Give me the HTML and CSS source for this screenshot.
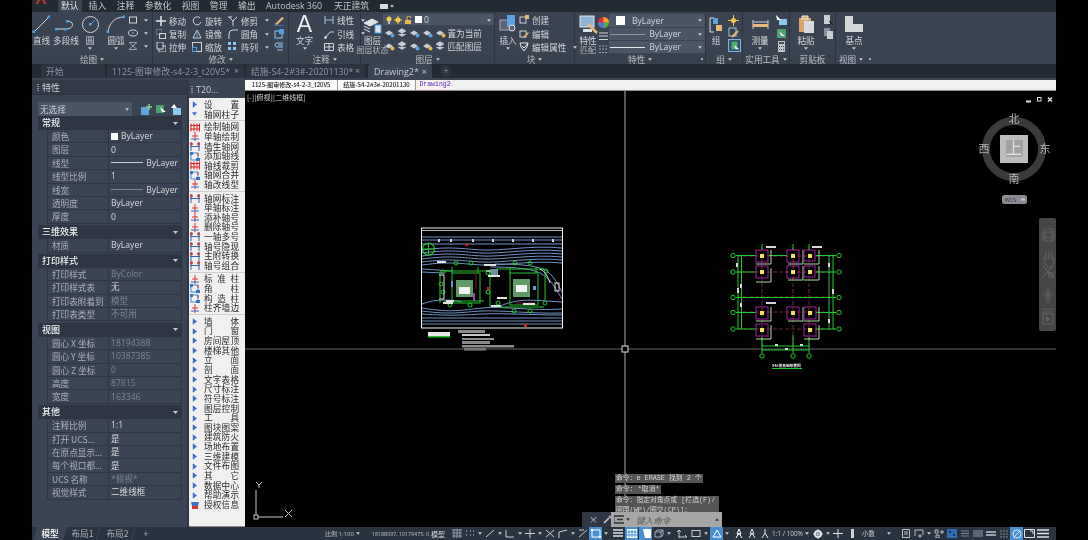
FILE: index.html
```html
<!DOCTYPE html>
<html lang="zh">
<head>
<meta charset="utf-8">
<title>AutoCAD</title>
<link rel="stylesheet" href="styles.css">
</head>
<body>
<svg class="defs" width="0" height="0">
  <symbol id="ar" viewBox="0 0 6 8"><path d="M1 0l5 4-5 4z" fill="#3f6fc0"/></symbol>
  <symbol id="gd" viewBox="0 0 10 9"><path d="M1 .5v8M4 .5v8M7 .5v8M9.5 .5v8M0 2.5h10M0 6h10" stroke="#d22" fill="none"/></symbol>
  <symbol id="ax" viewBox="0 0 10 9"><path d="M5 0v9M2 4h6" stroke="#d33" fill="none"/><path d="M1 7h8" stroke="#36c"/></symbol>
  <symbol id="dm" viewBox="0 0 10 9"><path d="M1 0v9M9 0v9M0 4.500h10" stroke="#36a" fill="none"/><circle cx="1.500" cy="2" r="1.400" fill="#c33"/><circle cx="8.500" cy="2" r="1.400" fill="#c33"/></symbol>
  <symbol id="cl" viewBox="0 0 10 9"><path d="M1 1h7v7H1z" stroke="#48c" fill="none"/><path d="M0 0h3v3H0zM6 6h4v3H6z" fill="#37b"/><path d="M8 1v3" stroke="#c33"/></symbol>
  <symbol id="dot" viewBox="0 0 5 3"><path d="M0 0h5L2.500 3z" fill="#c9ced6"/></symbol>
  <symbol id="lay" viewBox="0 0 12 10"><path d="M1 5l4-2.500L9 5 5 7.500z" fill="#c9ced6"/><circle cx="8.500" cy="7.500" r="2" fill="#5aa4e0"/></symbol>
  <symbol id="lay2" viewBox="0 0 12 10"><path d="M1 5l4-2.500L9 5 5 7.500z" fill="#c9ced6"/><circle cx="8.500" cy="7.500" r="2" fill="#e8b84a"/></symbol>
  <symbol id="lay3" viewBox="0 0 12 10"><path d="M1 3l4-2.500L9 3 5 5.500zM1 6l4 2.500L9 6" fill="#c9ced6" stroke="#c9ced6" stroke-width=".6"/></symbol>
</svg>

<div class="app">
  <header class="menubar">
    <svg class="logo" width="12" height="8" viewBox="0 0 12 8"><path d="M0 8L5 0h2l5 8H9L6 3 3 8z" fill="#a8322c"/></svg>
    <span class="m active">默认</span><span class="m">插入</span><span class="m">注释</span><span class="m">参数化</span><span class="m">视图</span><span class="m">管理</span><span class="m">输出</span><span class="m en">Autodesk 360</span><span class="m">天正建筑</span>
    <span class="mini"><i></i><svg width="4" height="3"><use href="#dot"/></svg></span>
  </header>

  <section class="ribbon">
    <div class="panel p1">
      <div class="pbody big-row">
        <div class="big w19 mr2"><svg width="19" height="19" viewBox="0 0 19 19"><path d="M2 17L17 2" stroke="#cfd4da"/><rect x="15.500" y="0.500" width="2.500" height="2.500" fill="#4aa3e8"/><rect x="0.500" y="15.500" width="2.500" height="2.500" fill="#4aa3e8"/></svg><b>直线</b></div>
        <div class="big w26 mr1"><svg width="22" height="19" viewBox="0 0 22 19"><path d="M1 14h10c8 0 9-8 1-8" stroke="#cfd4da" fill="none"/><rect x="0" y="13" width="2.500" height="2.500" fill="#4aa3e8"/><rect x="11" y="5" width="2.500" height="2.500" fill="#4aa3e8"/><rect x="9" y="13" width="2.500" height="2.500" fill="#4aa3e8"/></svg><b>多段线</b></div>
        <div class="big w20"><svg width="19" height="19" viewBox="0 0 19 19"><circle cx="9.500" cy="9.500" r="8" stroke="#cfd4da" fill="none"/><path d="M9.500 9.500L14 5" stroke="#4aa3e8"/><rect x="8" y="8" width="2.500" height="2.500" fill="#4aa3e8"/></svg><b>圆</b><svg class="dn" width="4" height="3"><use href="#dot"/></svg></div>
        <div class="big w24 mr0"><svg width="20" height="19" viewBox="0 0 20 19"><path d="M2 17C3 8 9 2 18 2" stroke="#cfd4da" fill="none"/><rect x="0.500" y="15.500" width="2.500" height="2.500" fill="#4aa3e8"/><rect x="16.500" y="0.500" width="2.500" height="2.500" fill="#4aa3e8"/></svg><b>圆弧</b><svg class="dn" width="4" height="3"><use href="#dot"/></svg></div>
        <div class="stack st1">
          <span class="ic"><svg width="10" height="10" viewBox="0 0 10 10"><rect x="1.500" y="2" width="7" height="6" stroke="#cfd4da" fill="none"/></svg><svg width="4" height="3"><use href="#dot"/></svg></span>
          <span class="ic"><svg width="10" height="10" viewBox="0 0 10 10"><ellipse cx="5" cy="5" rx="4.500" ry="3" stroke="#cfd4da" fill="none"/><circle cx="5" cy="5" r="1" fill="#4aa3e8"/></svg><svg width="4" height="3"><use href="#dot"/></svg></span>
          <span class="ic"><svg width="10" height="10" viewBox="0 0 10 10"><path d="M1 1.500h8M1 8.500h8M1 1.500l8 7M9 1.500l-8 7" stroke="#8fa3b8" fill="none"/></svg><svg width="4" height="3"><use href="#dot"/></svg></span>
        </div>
      </div>
      <div class="ptitle">绘图 <svg width="4" height="3"><use href="#dot"/></svg></div>
    </div>

    <div class="panel p2">
      <div class="pbody tools">
        <span class="t"><svg width="10" height="10" viewBox="0 0 10 10"><path d="M5 0v10M0 5h10" stroke="#e2e5e9" stroke-width="1.500"/></svg>移动</span>
        <span class="t"><svg width="10" height="10" viewBox="0 0 10 10"><path d="M8 2a4 4 0 1 0 1 4" stroke="#cfd4da" fill="none"/></svg>旋转</span>
        <span class="t"><svg width="10" height="10" viewBox="0 0 10 10"><path d="M1 1l4 4v5M9 1L5 5M0 1h4" stroke="#cfd4da" fill="none"/></svg>修剪<svg class="after" width="4" height="3"><use href="#dot"/></svg></span>
        <span class="t2"><svg width="10" height="10" viewBox="0 0 10 10"><path d="M8 1L1 8l2 1 7-7z" fill="#e8b878"/><path d="M0 10h9" stroke="#4aa3e8"/></svg></span>
        <span class="t"><svg width="10" height="10" viewBox="0 0 10 10"><rect x="0.500" y="0.500" width="5" height="5" stroke="#8fa3b8" stroke-dasharray="1 1" fill="none"/><rect x="3.500" y="4.500" width="6" height="5" stroke="#cfd4da" fill="none"/></svg>复制</span>
        <span class="t"><svg width="10" height="10" viewBox="0 0 10 10"><path d="M5 1L1 9h8z" stroke="#cfd4da" fill="none"/><path d="M5 1v8" stroke="#4aa3e8"/></svg>镜像</span>
        <span class="t"><svg width="10" height="10" viewBox="0 0 10 10"><path d="M1 10V5a4 4 0 0 1 4-4h5" stroke="#cfd4da" fill="none"/></svg>圆角<svg class="after" width="4" height="3"><use href="#dot"/></svg></span>
        <span class="t2"><svg width="10" height="10" viewBox="0 0 10 10"><rect x="1" y="2" width="7" height="7" stroke="#8ec7f0" fill="none"/><rect x="5" y="0" width="5" height="5" fill="#4aa3e8"/></svg></span>
        <span class="t"><svg width="10" height="10" viewBox="0 0 10 10"><path d="M1 0h6v7H1zM3 7v3h7V4H7" stroke="#cfd4da" fill="none"/></svg>拉伸</span>
        <span class="t"><svg width="10" height="10" viewBox="0 0 10 10"><rect x="0.500" y="0.500" width="9" height="9" stroke="#cfd4da" fill="none"/><rect x="0.500" y="5.500" width="4" height="4" stroke="#4aa3e8" fill="none"/></svg>缩放</span>
        <span class="t"><svg width="10" height="10" viewBox="0 0 10 10"><path d="M0 0h3v3H0zM5 0h3v3H5zM0 5h3v3H0zM5 5h3v3H5z" fill="#8ec7f0"/></svg>阵列<svg class="after" width="4" height="3"><use href="#dot"/></svg></span>
        <span class="t2"><svg width="10" height="10" viewBox="0 0 10 10"><path d="M9 1H3a2 2 0 0 0 0 4h6M9 3H4M9 8H3" stroke="#8ec7f0" fill="none"/></svg></span>
      </div>
      <div class="ptitle">修改 <svg width="4" height="3"><use href="#dot"/></svg></div>
    </div>

    <div class="panel p3">
      <div class="pbody big-row">
        <div class="big w30"><span class="bigA">A</span><b>文字</b><svg class="dn" width="4" height="3"><use href="#dot"/></svg></div>
        <div class="stack st2">
          <span class="t"><svg width="10" height="10" viewBox="0 0 10 10"><path d="M1 1v8M9 1v8M1 5h8" stroke="#9fc4e4" fill="none"/></svg>线性<svg class="after" width="4" height="3"><use href="#dot"/></svg></span>
          <span class="t"><svg width="10" height="10" viewBox="0 0 10 10"><path d="M1 9l5-6h4" stroke="#cfd4da" fill="none"/><circle cx="1.500" cy="8.500" r="1.400" fill="#cfd4da"/></svg>引线<svg class="after" width="4" height="3"><use href="#dot"/></svg></span>
          <span class="t"><svg width="10" height="10" viewBox="0 0 10 10"><path d="M.5 1.500h9v7h-9zM.5 5h9M5 1.500v7" stroke="#cfd4da" fill="none"/></svg>表格</span>
        </div>
      </div>
      <div class="ptitle">注释 <svg width="4" height="3"><use href="#dot"/></svg></div>
    </div>

    <div class="panel p4">
      <div class="pbody big-row">
        <div class="big w19"><svg width="19" height="19" viewBox="0 0 19 19"><path d="M1 8l8-4 6 3-8 4zM1 11l6 3M1 14l6 3" stroke="#e2e5e9" fill="#dfe3e8"/><rect x="12" y="10" width="6" height="8" fill="#dfe3e8" stroke="#4aa3e8"/></svg><b>图层</b><b class="cut">图层状态</b></div>
        <div class="laycol">
          <div class="dd dd-layer">
            <svg width="6" height="8" viewBox="0 0 6 8"><circle cx="3" cy="3" r="2.500" fill="#f2c94c"/><rect x="2" y="5" width="2" height="3" fill="#bbb"/></svg>
            <svg width="8" height="8" viewBox="0 0 8 8"><circle cx="4" cy="4" r="2.500" fill="#f2c94c"/><path d="M4 0v8M0 4h8" stroke="#f2c94c"/></svg>
            <svg width="8" height="8" viewBox="0 0 8 8"><path d="M1 4h6v4H1z" fill="#e8b84a"/><path d="M3 4V2a2 2 0 0 1 4 0" stroke="#e8b84a" fill="none"/></svg>
            <i class="sw"></i><span>0</span><svg class="end" width="4" height="3"><use href="#dot"/></svg>
          </div>
          <div class="lrow"><svg width="12" height="10"><use href="#lay"/></svg><svg width="12" height="10"><use href="#lay3"/></svg><svg width="12" height="10"><use href="#lay"/></svg><svg width="12" height="10"><use href="#lay"/></svg><svg width="12" height="10"><use href="#lay2"/></svg><em>置为当前</em></div>
          <div class="lrow"><svg width="12" height="10"><use href="#lay2"/></svg><svg width="12" height="10"><use href="#lay3"/></svg><svg width="12" height="10"><use href="#lay"/></svg><svg width="12" height="10"><use href="#lay2"/></svg><svg width="12" height="10"><use href="#lay3"/></svg><em>匹配图层</em></div>
        </div>
      </div>
      <div class="ptitle">图层 <svg width="4" height="3"><use href="#dot"/></svg></div>
    </div>

    <div class="panel p5">
      <div class="pbody big-row">
        <div class="big w22"><svg width="19" height="19" viewBox="0 0 19 19"><rect x="1" y="5" width="12" height="10" fill="#5a6472" stroke="#aab"/><path d="M8 0h8v12H8z" fill="#5aa4e0"/><circle cx="13" cy="13" r="3" fill="#5a6472" stroke="#dde"/></svg><b>插入</b><svg class="dn" width="4" height="3"><use href="#dot"/></svg></div>
        <div class="stack st3">
          <span class="t"><svg width="10" height="10" viewBox="0 0 10 10"><rect x="1" y="2" width="6" height="6" stroke="#cfd4da" fill="none"/><path d="M6 0h4v4H6z" fill="#e8b878"/></svg>创建</span>
          <span class="t"><svg width="10" height="10" viewBox="0 0 10 10"><rect x="1" y="2" width="6" height="6" stroke="#cfd4da" fill="none"/><path d="M5 9l5-5-1-1-5 5z" fill="#e8b878"/></svg>编辑</span>
          <span class="t"><svg width="10" height="10" viewBox="0 0 10 10"><path d="M1 1h8l-1 4-3 4-3-4z" stroke="#dfe3e8" fill="none"/><path d="M3 4l2 2 4-5" stroke="#e8e8e8" fill="none"/></svg>编辑属性<svg class="after" width="4" height="3"><use href="#dot"/></svg></span>
        </div>
      </div>
      <div class="ptitle">块 <svg width="4" height="3"><use href="#dot"/></svg></div>
    </div>

    <div class="panel p6">
      <div class="pbody big-row">
        <div class="big w22"><svg width="19" height="19" viewBox="0 0 19 19"><rect x="1" y="1" width="14" height="11" fill="#8fb5d6" stroke="#dfe3e8"/><path d="M4 14h9v3H4z" fill="#dfe3e8"/><path d="M9 9l9 9" stroke="#e8b878" stroke-width="2.500"/></svg><b>特性</b><b class="cut">匹配</b></div>
        <div class="swcol">
          <svg width="11" height="11" viewBox="0 0 11 11"><circle cx="5.500" cy="5.500" r="5.500" fill="#e24"/><path d="M5.500 5.500V0a5.500 5.500 0 0 1 5.500 5.500z" fill="#f5a623"/><path d="M5.500 5.500H11a5.500 5.500 0 0 1-5.500 5.500z" fill="#4caf50"/><path d="M5.500 5.500V11A5.500 5.500 0 0 1 0 5.500z" fill="#3f7fd8"/></svg>
          <svg width="11" height="9" viewBox="0 0 11 9"><path d="M1 1h9M1 4h9M1 7.500h9" stroke="#cfd4da"/></svg>
          <svg width="11" height="9" viewBox="0 0 11 9"><path d="M1 1h9M1 4h9M1 7.500h9" stroke="#9aa3ad" stroke-dasharray="2 1"/></svg>
        </div>
        <div class="ddcol">
          <div class="dd d1"><i class="sw"></i><span>ByLayer</span><svg class="end" width="4" height="3"><use href="#dot"/></svg></div>
          <div class="dd d2"><u class="ln thin"></u><span>ByLayer</span><svg class="end" width="4" height="3"><use href="#dot"/></svg></div>
          <div class="dd d2"><u class="ln"></u><span>ByLayer</span><svg class="end" width="4" height="3"><use href="#dot"/></svg></div>
        </div>
      </div>
      <div class="ptitle launch">特性 <svg width="4" height="3"><use href="#dot"/></svg></div>
    </div>

    <div class="panel p7">
      <div class="pbody big-row">
        <div class="big w16"><svg width="14" height="19" viewBox="0 0 14 19"><path d="M1 3h4M1 3v14h4" stroke="#dfe3e8" fill="none"/><rect x="4" y="3" width="5" height="6" fill="#5aa4e0"/><rect x="7" y="10" width="6" height="6" fill="#e8b878"/></svg><b>组</b></div>
        <div class="stack st4">
          <svg width="11" height="11" viewBox="0 0 11 11"><circle cx="5.500" cy="5.500" r="2.500" fill="#f2c94c"/><path d="M5.500 0v11M0 5.500h11" stroke="#f2c94c"/></svg>
          <svg width="11" height="11" viewBox="0 0 11 11"><rect x="1" y="1" width="7" height="8" stroke="#9fc4e4" fill="none"/><path d="M4 10l6-6" stroke="#e8b878" stroke-width="2"/></svg>
          <svg class="sel" width="13" height="13" viewBox="0 0 13 13"><rect x="3" y="2" width="7" height="9" fill="#4caf70"/><path d="M6 6l6 5H8z" fill="#fff"/></svg>
        </div>
      </div>
      <div class="ptitle">组 <svg width="4" height="3"><use href="#dot"/></svg></div>
    </div>

    <div class="panel p8">
      <div class="pbody big-row">
        <div class="big w24"><svg width="19" height="19" viewBox="0 0 19 19"><path d="M2 5v9M17 5v9M2 7h15" stroke="#cfd4da" fill="none"/><rect x="2" y="9" width="15" height="3" fill="#e8b878"/></svg><b>测量</b><svg class="dn" width="4" height="3"><use href="#dot"/></svg></div>
        <div class="stack st4 dense">
          <svg width="11" height="11" viewBox="0 0 11 11"><rect x="3" y="4" width="8" height="6" fill="#8ec7f0"/><path d="M0 0l5 5H1z" fill="#fff"/></svg>
          <svg width="11" height="11" viewBox="0 0 11 11"><rect x="1" y="1" width="9" height="9" fill="#4c9f70"/><path d="M3 3l6 5H5z" fill="#dde"/></svg>
          <svg width="11" height="11" viewBox="0 0 11 11"><path d="M2 0h7v11H2z" fill="#c0c4ca"/><path d="M3 1h5v2H3zM3 5h1v1H3zM5 5h1v1H5zM7 5h1v1H7zM3 8h1v1H3zM5 8h1v1H5zM7 8h1v1H7z" fill="#444c58"/></svg>
        </div>
      </div>
      <div class="ptitle">实用工具 <svg width="4" height="3"><use href="#dot"/></svg></div>
    </div>

    <div class="panel p9">
      <div class="pbody big-row">
        <div class="big w24"><svg width="17" height="19" viewBox="0 0 17 19"><path d="M1 3h12v14H1z" fill="#d9a36a"/><path d="M4 1h6v3H4z" fill="#d9a36a" stroke="#eee"/><path d="M6 6h10v12H6z" fill="#d8dade"/></svg><b>粘贴</b><svg class="dn" width="4" height="3"><use href="#dot"/></svg></div>
        <div class="stack st4 pair">
          <svg width="11" height="11" viewBox="0 0 11 11"><path d="M1 0h6v9H1z" fill="#c9ced6"/><path d="M6 6l4 4M10 6l-4 4" stroke="#222"/></svg>
          <svg width="11" height="11" viewBox="0 0 11 11"><path d="M1 0h6v8H1z" fill="#8a919c"/><path d="M4 3h6v8H4z" fill="#c9ced6"/></svg>
        </div>
      </div>
      <div class="ptitle">剪贴板</div>
    </div>

    <div class="panel p10">
      <div class="pbody big-row">
        <div class="big w24"><svg width="18" height="19" viewBox="0 0 18 19"><path d="M0 1h8v8h10v8H0z" fill="#d4d6da"/></svg><b>基点</b><svg class="dn" width="4" height="3"><use href="#dot"/></svg></div>
      </div>
      <div class="ptitle left">视图 <svg width="4" height="3"><use href="#dot"/></svg><i class="launch-mark"></i></div>
    </div>
  </section>

  <nav class="doctabs">
    <div class="dt s"><span>开始</span></div>
    <div class="dt a"><span>1125-图审修改-s4-2-3_t20V5*</span><b>×</b></div>
    <div class="dt b"><span>结施-S4-2#3#-20201130*</span><b>×</b></div>
    <div class="dt c"><span>Drawing2*</span><b>×</b></div>
    <div class="plus">+</div>
  </nav>

  <main class="main">
    <aside class="props">
      <div class="phead"><i class="grip"></i>特性</div>
      <div class="pinner">
        <div class="selrow">
          <div class="sel-dd">无选择<svg width="4" height="3"><use href="#dot"/></svg></div>
          <svg width="11" height="11" viewBox="0 0 11 11"><rect x="0" y="3" width="8" height="8" fill="#5aa4e0"/><path d="M8 0v6M5 3h6" stroke="#7fd08a" stroke-width="1.500"/></svg>
          <svg width="11" height="11" viewBox="0 0 11 11"><rect x="0" y="1" width="8" height="8" fill="#4c9f70"/><path d="M4 3l6 5H6z" fill="#fff"/></svg>
          <svg width="11" height="11" viewBox="0 0 11 11"><rect x="2" y="4" width="8" height="7" fill="#8ec7f0"/><path d="M3 0l3 4H0z" fill="#fff"/></svg>
        </div>

        <div class="sec">常规<svg width="5" height="3"><use href="#dot"/></svg></div>
        <div class="row"><span class="k">颜色</span><span class="v"><i class="sw2"></i>ByLayer</span></div>
        <div class="row"><span class="k">图层</span><span class="v">0</span></div>
        <div class="row"><span class="k">线型</span><span class="v line"><u></u>ByLayer</span></div>
        <div class="row"><span class="k">线型比例</span><span class="v">1</span></div>
        <div class="row"><span class="k">线宽</span><span class="v line"><u class="thin"></u>ByLayer</span></div>
        <div class="row"><span class="k">透明度</span><span class="v">ByLayer</span></div>
        <div class="row"><span class="k">厚度</span><span class="v">0</span></div>

        <div class="sec">三维效果<svg width="5" height="3"><use href="#dot"/></svg></div>
        <div class="row"><span class="k">材质</span><span class="v">ByLayer</span></div>

        <div class="sec">打印样式<svg width="5" height="3"><use href="#dot"/></svg></div>
        <div class="row"><span class="k">打印样式</span><span class="v dim">ByColor</span></div>
        <div class="row"><span class="k">打印样式表</span><span class="v">无</span></div>
        <div class="row"><span class="k">打印表附着到</span><span class="v dim">模型</span></div>
        <div class="row"><span class="k">打印表类型</span><span class="v dim">不可用</span></div>

        <div class="sec">视图<svg width="5" height="3"><use href="#dot"/></svg></div>
        <div class="row"><span class="k">圆心 X 坐标</span><span class="v dim">18194388</span></div>
        <div class="row"><span class="k">圆心 Y 坐标</span><span class="v dim">10387385</span></div>
        <div class="row"><span class="k">圆心 Z 坐标</span><span class="v dim">0</span></div>
        <div class="row"><span class="k">高度</span><span class="v dim">87815</span></div>
        <div class="row"><span class="k">宽度</span><span class="v dim">163346</span></div>

        <div class="sec">其他<svg width="5" height="3"><use href="#dot"/></svg></div>
        <div class="row"><span class="k">注释比例</span><span class="v">1:1</span></div>
        <div class="row"><span class="k">打开 UCS...</span><span class="v">是</span></div>
        <div class="row"><span class="k">在原点显示...</span><span class="v">是</span></div>
        <div class="row"><span class="k">每个视口都...</span><span class="v">是</span></div>
        <div class="row"><span class="k">UCS 名称</span><span class="v dim">*俯视*</span></div>
        <div class="row"><span class="k">视觉样式</span><span class="v">二维线框</span></div>
      </div>
    </aside>

    <aside class="t20">
      <div class="thead"><i class="grip"></i>T20...</div>
      <div class="tlist">
        <div class="tg g1">
          <div class="ti"><svg width="5" height="7"><use href="#ar"/></svg><span>设置</span></div>
          <div class="ti"><svg width="6" height="4" viewBox="0 0 6 4"><path d="M0 0h6L3 4z" fill="#3f6fc0"/></svg><span>轴网柱子</span></div>
        </div>
        <div class="tg">
          <div class="ti ic"><svg width="10" height="9"><use href="#gd"/></svg><span>绘制轴网</span></div>
          <div class="ti ic"><svg width="10" height="9"><use href="#ax"/></svg><span>单轴绘制</span></div>
          <div class="ti ic"><svg width="10" height="9"><use href="#dm"/></svg><span>墙生轴网</span></div>
          <div class="ti ic"><svg width="10" height="9"><use href="#cl"/></svg><span>添加轴线</span></div>
          <div class="ti ic"><svg width="10" height="9"><use href="#gd"/></svg><span>轴线裁剪</span></div>
          <div class="ti ic"><svg width="10" height="9"><use href="#cl"/></svg><span>轴网合并</span></div>
          <div class="ti ic"><svg width="10" height="9"><use href="#ax"/></svg><span>轴改线型</span></div>
        </div>
        <div class="tg">
          <div class="ti ic"><svg width="10" height="9"><use href="#dm"/></svg><span>轴网标注</span></div>
          <div class="ti ic"><svg width="10" height="9"><use href="#ax"/></svg><span>单轴标注</span></div>
          <div class="ti ic"><svg width="10" height="9"><use href="#ax"/></svg><span>添补轴号</span></div>
          <div class="ti ic"><svg width="10" height="9"><use href="#ax"/></svg><span>删除轴号</span></div>
          <div class="ti ic"><svg width="10" height="9"><use href="#dm"/></svg><span>一轴多号</span></div>
          <div class="ti ic"><svg width="10" height="9"><use href="#dm"/></svg><span>轴号隐现</span></div>
          <div class="ti ic"><svg width="10" height="9"><use href="#dm"/></svg><span>主附转换</span></div>
          <div class="ti ic"><svg width="10" height="9"><use href="#dm"/></svg><span>轴号组合</span></div>
        </div>
        <div class="tg">
          <div class="ti ic"><svg width="10" height="9"><use href="#ax"/></svg><span>标准柱</span></div>
          <div class="ti ic"><svg width="10" height="9"><use href="#cl"/></svg><span>角柱</span></div>
          <div class="ti ic"><svg width="10" height="9"><use href="#cl"/></svg><span>构造柱</span></div>
          <div class="ti ic"><svg width="10" height="9"><use href="#ax"/></svg><span>柱齐墙边</span></div>
        </div>
        <div class="tg last">
          <div class="ti"><svg width="5" height="7"><use href="#ar"/></svg><span>墙体</span></div>
          <div class="ti"><svg width="5" height="7"><use href="#ar"/></svg><span>门窗</span></div>
          <div class="ti"><svg width="5" height="7"><use href="#ar"/></svg><span>房间屋顶</span></div>
          <div class="ti"><svg width="5" height="7"><use href="#ar"/></svg><span>楼梯其他</span></div>
          <div class="ti"><svg width="5" height="7"><use href="#ar"/></svg><span>立面</span></div>
          <div class="ti"><svg width="5" height="7"><use href="#ar"/></svg><span>剖面</span></div>
          <div class="ti"><svg width="5" height="7"><use href="#ar"/></svg><span>文字表格</span></div>
          <div class="ti"><svg width="5" height="7"><use href="#ar"/></svg><span>尺寸标注</span></div>
          <div class="ti"><svg width="5" height="7"><use href="#ar"/></svg><span>符号标注</span></div>
          <div class="ti"><svg width="5" height="7"><use href="#ar"/></svg><span>图层控制</span></div>
          <div class="ti"><svg width="5" height="7"><use href="#ar"/></svg><span>工具</span></div>
          <div class="ti"><svg width="5" height="7"><use href="#ar"/></svg><span>图块图案</span></div>
          <div class="ti"><svg width="5" height="7"><use href="#ar"/></svg><span>建筑防火</span></div>
          <div class="ti"><svg width="5" height="7"><use href="#ar"/></svg><span>场地布置</span></div>
          <div class="ti"><svg width="5" height="7"><use href="#ar"/></svg><span>三维建模</span></div>
          <div class="ti"><svg width="5" height="7"><use href="#ar"/></svg><span>文件布图</span></div>
          <div class="ti"><svg width="5" height="7"><use href="#ar"/></svg><span>其它</span></div>
          <div class="ti"><svg width="5" height="7"><use href="#ar"/></svg><span>数据中心</span></div>
          <div class="ti"><svg width="5" height="7"><use href="#ar"/></svg><span>帮助演示</span></div>
          <div class="ti ic"><svg width="10" height="9" viewBox="0 0 10 9"><path d="M1 2h8L8 6H2z" fill="#3f6fc0"/><path d="M2 6h6v3H2z" fill="#d33"/></svg><span>授权信息</span></div>
        </div>
      </div>
    </aside>

    <div class="work">
      <div class="filetabs">
        <span class="ft">1125-图审修改-s4-2-3_t20V5</span>
        <span class="ft f2">结施-S4-2#3#-20201130</span>
        <span class="ft f3">Drawing2</span>
      </div>
      <div class="viewport">
        <div class="vlabel">[-][俯视][二维线框]</div>

        <svg class="canvas" width="811" height="436" viewBox="245 90 811 436">
          <!-- site plan -->
          <g fill="none">
            <rect x="421.500" y="227" width="141" height="100" stroke="#f2f2f2"/>
            <path d="M422 229.500h140" stroke="#bbb"/>
            <g stroke="#6f93c4">
              <path d="M422 236h140M422 239h140M422 243h140"/>
              <path d="M422 249c30-4 40-1 60 0s50-5 80-2"/>
              <path d="M422 252c30-4 40-1 60 0s50-5 80-2"/>
              <path d="M422 255c30-4 40-1 60 0s50-5 80-2"/>
              <path d="M422 258c30-4 40-1 60 0s50-5 80-2"/>
              <path d="M422 261c30-4 40-1 60 0s50-5 80-2"/>
              <path d="M422 264c30-4 40-1 60 0s50-5 80-2"/>
              <path d="M422 307c30 5 40 2 60 0s50 3 80 1"/>
              <path d="M422 310c30 4 40 1 60 0s50 3 80 2"/>
              <path d="M422 313c30 2 40 1 60 0s50 1 80 1"/>
              <path d="M422 317h140M422 320h140M422 323h140"/>
              <path d="M422 268l30 2M422 271l22 1M422 303c15-6 30-4 40-2M500 305c20-8 30-6 62-4M490 266c20 0 40 1 50 6 12 6 18 20 22 26M495 263c20 0 40 1 50 6 8 4 14 16 17 22"/>
            </g>
            <circle cx="428.500" cy="248" r="6" stroke="#25c230" stroke-width="1.200"/>
            <path d="M422 248h13M428.500 242v12" stroke="#25c230"/>
            <g stroke="#25c230">
              <rect x="452" y="272" width="28" height="30"/>
              <rect x="510" y="272" width="28" height="32"/>
              <path d="M440 270h54M440 272v30M444 300h40M490 268v38M496 268h48M545 272v28M498 306h46M452 266v6M478 266v6M510 266v6M536 266v6"/>
            </g>
            <g stroke="#25c230">
              <circle cx="443" cy="271" r="2"/><circle cx="456" cy="262" r="2"/><circle cx="471" cy="262" r="2"/><circle cx="443" cy="291" r="2"/><circle cx="488" cy="291" r="2"/><circle cx="450" cy="304" r="2"/><circle cx="470" cy="304" r="2"/><circle cx="498" cy="302" r="2"/><circle cx="514" cy="310" r="2"/><circle cx="530" cy="310" r="2"/><circle cx="545" cy="302" r="2"/><circle cx="515" cy="262" r="2"/><circle cx="530" cy="262" r="2"/><circle cx="546" cy="270" r="2"/><circle cx="488" cy="272" r="2"/><circle cx="441" cy="283" r="2"/>
            </g>
            <g stroke="#d9dde3">
              <path d="M439 274h5v24h-5M486 270h10M540 268c5 2 8 8 10 14" />
              <rect x="555" y="282" width="4" height="8"/>
            </g>
            <path d="M476 268v20M516 302h18" stroke="#7a1d30"/>
          </g>
          <g>
            <rect x="456" y="279" width="17" height="17" fill="#5f9a67"/>
            <rect x="459" y="286" width="11" height="7" fill="#f3f3f3"/>
            <rect x="513" y="278" width="17" height="18" fill="#5f9a67"/>
            <rect x="516" y="284" width="11" height="7" fill="#f3f3f3"/>
            <rect x="491" y="268" width="7" height="8" fill="#6f8fa6"/>
            <rect x="473" y="292" width="2" height="8" fill="#a040b0"/>
            <rect x="451" y="280" width="2" height="6" fill="#4aa3e8"/>
            <rect x="533" y="285" width="3" height="4" fill="#4aa3e8"/>
            <path d="M465 243h3v2h-3zM487 286h2v3h-2zM524 323h3v3h-3z" fill="#d02020"/>
            <path d="M438 238h2v3h-2zM450 238h2v3h-2zM472 238h2v3h-2zM492 238h2v3h-2zM512 238h2v3h-2zM532 238h2v3h-2zM552 238h2v3h-2z" fill="#cfd4da"/>
            <path d="M437 260h9v2h-9zM443 301h10v2h-10zM484 263h12v2h-12zM446 299h8v2h-8zM497 296h10v2h-10zM491 304h10v2h-10zM523 302h12v2h-12zM488 274h12v2h-12z" fill="#e0e4e0"/>
            <rect x="428" y="331" width="22" height="4" fill="#e8e8e8"/>
            <rect x="428" y="335" width="22" height="1.500" fill="#25c230"/>
            <rect x="458" y="329" width="27" height="3" fill="#8a8a8a"/>
            <rect x="462" y="333" width="28" height="2" fill="#c8c8c8"/>
            <rect x="462" y="337" width="32" height="2" fill="#8a8a8a"/>
            <rect x="462" y="340" width="28" height="3" fill="#8a8a8a"/>
            <rect x="462" y="344" width="52" height="2.500" fill="#8a8a8a"/>
            <rect x="464" y="347" width="22" height="2.500" fill="#8a8a8a"/>
          </g>

          <!-- crosshair -->
          <path d="M245 348H1056" stroke="#626262"/>
          <path d="M625 90V512" stroke="#b0b0b0"/>
          <rect x="622" y="345" width="6" height="6" fill="#000" stroke="#e0e0e0"/>

          <!-- foundation plan -->
          <g fill="none">
            <g stroke="#6a2a2a" stroke-dasharray="4 2">
              <path d="M737 255H835M737 271H835M737 296H835M737 311H835M737 328H835"/>
              <path d="M762 246V350M793 246V350M809 246V350"/>
            </g>
            <g stroke="#20c830">
              <path d="M736 254.500H756M769 254.500H787M816 254.500H836M736 271H756M816 271H836M736 296.500H836M736 311.500H756M816 311.500H836M736 328H756M816 328H836"/>
              <path d="M762 243V249M793 243V249M809 243V249M762 336V352M793 334V352M809 336V352"/>
              <path d="M738 254V328M741.500 254V328M829 254V328M833 254V328M762 345H809M762 349H809"/>
              <circle cx="733" cy="254.500" r="2.200"/><circle cx="733" cy="271" r="2.200"/><circle cx="733" cy="296.500" r="2.200"/><circle cx="733" cy="311.500" r="2.200"/><circle cx="733" cy="328" r="2.200"/>
              <circle cx="839" cy="254.500" r="2.200"/><circle cx="839" cy="271" r="2.200"/><circle cx="839" cy="296.500" r="2.200"/><circle cx="839" cy="311.500" r="2.200"/><circle cx="839" cy="328" r="2.200"/>
              <circle cx="762" cy="355" r="2.200"/><circle cx="793" cy="355" r="2.200"/><circle cx="809" cy="355" r="2.200"/>
            </g>
            <g stroke="#b0d8a0">
              <path d="M756 263h15v-14M788 263h15v-14M804 263h15v-14M756 281h15v-14M788 279h15v-14M804 279h15v-14M756 320h15v-14M788 320h15v-14M804 320h15v-14M756 338h15v-14M804 338h15v-14"/>
            </g>
            <g stroke="#a020a0">
              <rect x="756" y="249" width="12" height="12"/><rect x="787" y="249" width="12" height="12"/><rect x="804" y="249" width="11" height="11"/>
              <rect x="756" y="265" width="12" height="12"/><rect x="787" y="265" width="12" height="12"/><rect x="804" y="265" width="11" height="11"/>
              <rect x="756" y="306" width="12" height="12"/><rect x="787" y="306" width="12" height="12"/><rect x="804" y="306" width="12" height="12"/>
              <rect x="756" y="323" width="12" height="12"/><rect x="804" y="323" width="12" height="12"/>
            </g>
          </g>
          <g fill="#f0e060">
            <rect x="760" y="253" width="4" height="4"/><rect x="791" y="253" width="4" height="4"/><rect x="808" y="253" width="4" height="4"/>
            <rect x="760" y="269" width="4" height="4"/><rect x="791" y="269" width="4" height="4"/><rect x="808" y="269" width="4" height="4"/>
            <rect x="760" y="310" width="4" height="4"/><rect x="791" y="310" width="4" height="4"/><rect x="808" y="310" width="4" height="4"/>
            <rect x="760" y="327" width="4" height="4"/><rect x="808" y="327" width="4" height="4"/>
          </g>
          <g fill="#d8d8d8">
            <path d="M766 245h10v2h-10zM812 245h10v2h-10zM766 301h10v2h-10zM736 262h2v4h-2zM740 283h2v4h-2zM740 302h2v4h-2zM737 287h2v5h-2zM828 262h2v4h-2zM832 288h2v5h-2zM828 318h2v4h-2zM775 343h3v2h-3zM800 343h3v2h-3zM785 347h3v2h-3z"/>
          </g>
          <text x="772" y="366" class="dtitle">34#楼基础布置图</text>
          <rect x="772" y="367" width="30" height="1" fill="#20c830"/>

          <!-- ucs icon -->
          <g fill="none" stroke="#c8c8c8">
            <rect x="254" y="514" width="4" height="4"/>
            <path d="M256 514V489M258 516H283"/>
            <path d="M256 481l3 3 3-3M259 484v3M285 509l7 7M292 509l-7 7"/>
          </g>

          <!-- window buttons -->
          <g fill="none" stroke="#e0e0e0">
            <path d="M1026 100.500h5" stroke-width="2"/>
            <rect x="1037.500" y="96.500" width="3.500" height="3.500"/>
            <path d="M1048 96.500l4 4M1052 96.500l-4 4" stroke-width="1.500"/>
          </g>

          <!-- view cube -->
          <circle cx="1014" cy="148" r="28" fill="none" stroke="#3a3a3a" stroke-width="8"/>
          <rect x="1000" y="134" width="28" height="28" fill="#bcbcbc"/>
          <rect x="1006" y="139" width="17" height="17" fill="#a2a2a2"/>
          <g class="vc">
            <text x="1014" y="122">北</text>
            <text x="1014" y="182">南</text>
            <text x="984" y="152">西</text>
            <text x="1045" y="152">东</text>
            <text x="1014" y="153" class="top">上</text>
          </g>
          <rect x="1002" y="194" width="25" height="9" rx="2.500" fill="#8b8b94"/>
          <text x="1010.500" y="201" class="wcs">WCS</text>
          <rect x="1021" y="197.500" width="4" height="2" fill="#c9c9d0"/>

          <!-- nav bar -->
          <rect x="1039" y="217" width="17" height="113" rx="2" fill="#464646"/>
          <g fill="none" stroke="#5f5f5f" stroke-width="1.200">
            <rect x="1043" y="228" width="11" height="12" rx="3"/>
            <rect x="1045" y="231" width="7" height="6"/>
            <path d="M1044 256v5l4 5h4l2-5v-5M1046 251v8M1049 250v8M1052 251v8"/>
            <path d="M1043 265l10 11M1053 265l-10 11"/>
            <circle cx="1051" cy="274" r="2.500"/>
            <path d="M1048 286v16M1042 294h12M1045 290l3 4 3-4M1045 298l3-4 3 4"/>
            <path d="M1042 308h12M1042 311h12"/>
            <rect x="1043" y="313" width="10" height="10"/>
          </g>
          <path d="M1046 315l5 3-5 3z" fill="#5f5f5f"/>
        </svg>

        <div class="hist">
          <p>命令：e ERASE 找到 2 个</p>
          <p>命令: *取消*</p>
          <p class="wrap">命令：指定对角点或 [栏选(F)/<br>圈围(WP)/圈交(CP)]:</p>
        </div>
        <div class="cmd">
          <div class="cmdl">
            <i class="grip2"></i><span>×</span>
            <svg width="9" height="9" viewBox="0 0 9 9"><path d="M1 8l5-5M6 1l2 2" stroke="#c9ced6" stroke-width="1.500"/></svg>
          </div>
          <div class="cmdi">
            <svg width="10" height="9" viewBox="0 0 10 9"><path d="M0 1h10M0 8h10M3 4.500h6" stroke="#333" stroke-width="1.300"/><path d="M0 1v7" stroke="#333"/></svg>
            <svg width="4" height="3" viewBox="0 0 5 3"><path d="M0 0h5L2.500 3z" fill="#333"/></svg>
            <span>键入命令</span>
            <svg class="up" width="4" height="3" viewBox="0 0 5 3"><path d="M0 3h5L2.500 0z" fill="#333"/></svg>
          </div>
        </div>
      </div>
    </div>
  </main>

  <footer class="status">
    <div class="ltabs">
      <span class="lt on">模型</span><span class="lt">布局1</span><span class="lt">布局2</span><span class="lt pl">+</span>
    </div>
    <div class="sleft">
      <span class="s1">比例 1:100 <svg width="4" height="3"><use href="#dot"/></svg></span>
      <span class="s2">18188097, 10179475, 0</span>
      <span class="s3">模型</span>
    </div>
    <div class="sic">
      <i class="g"><svg width="10" height="9" viewBox="0 0 10 9"><path d="M0 1h10M0 4h10M0 7h10M2 0v9M5 0v9M8 0v9" stroke="#8fa0b4"/></svg></i>
      <i class="g"><svg width="10" height="9" viewBox="0 0 10 9"><path d="M1 2h1M5 2h1M8 2h1M1 6h1M5 6h1M8 6h1" stroke="#c9ced6"/></svg></i>
      <i class="m2"><svg width="4" height="3"><use href="#dot"/></svg></i>
      <i class="g"><svg width="10" height="9" viewBox="0 0 10 9"><path d="M1 8L9 1" stroke="#c9ced6"/></svg></i>
      <i class="m2"><svg width="4" height="3"><use href="#dot"/></svg></i>
      <i class="g"><svg width="10" height="9" viewBox="0 0 10 9"><path d="M1 1v7h8" stroke="#c9ced6" fill="none"/></svg></i>
      <i class="m2"><svg width="4" height="3"><use href="#dot"/></svg></i>
      <i class="g"><svg width="10" height="9" viewBox="0 0 10 9"><path d="M5 0v9M0 4.500h10" stroke="#c9ced6"/></svg></i>
      <i class="m2"><svg width="4" height="3"><use href="#dot"/></svg></i>
      <i class="g"><svg width="10" height="9" viewBox="0 0 10 9"><path d="M1 8l8-7M1 1l8 7" stroke="#c9ced6"/></svg></i>
      <i class="g"><svg width="10" height="9" viewBox="0 0 10 9"><path d="M1 9V3L9 1" stroke="#c9ced6" fill="none"/></svg></i>
      <i class="m2"><svg width="4" height="3"><use href="#dot"/></svg></i>
      <i class="g"><svg width="10" height="9" viewBox="0 0 10 9"><path d="M1 8L9 1M1 1h5" stroke="#c9ced6" fill="none"/></svg></i>
      <i class="b on"><svg width="10" height="9" viewBox="0 0 10 9"><path d="M1 1v7h8V1z" stroke="#fff" fill="none"/><rect x="0" y="0" width="2" height="2" fill="#fff"/><rect x="8" y="7" width="2" height="2" fill="#fff"/></svg></i>
      <i class="m2"><svg width="4" height="3"><use href="#dot"/></svg></i>
      <i class="g gl"><svg width="10" height="9" viewBox="0 0 10 9"><path d="M0 1h10M0 4h10M0 7h10" stroke="#dfe3e8" stroke-width="1.300"/></svg></i>
      <i class="b on"><svg width="10" height="9" viewBox="0 0 10 9"><path d="M0 0h10v9H0z" fill="#fff"/><path d="M2 1v7M5 1v7M8 1v7M0 3h10M0 6h10" stroke="#4b8fd0"/></svg></i>
      <i class="b on bl"><svg width="10" height="9" viewBox="0 0 10 9"><path d="M2 0h8v9H4z" fill="#fff"/></svg></i>
      <i class="g"><svg width="10" height="9" viewBox="0 0 10 9"><path d="M1 3h6v5H1zM1 3l2-2h6L7 3M7 8l2-2V1" stroke="#9fa8b4" fill="none"/></svg></i>
      <i class="m2"><svg width="4" height="3"><use href="#dot"/></svg></i>
      <i class="g xg"><svg width="10" height="9" viewBox="0 0 10 9"><path d="M2 9V1M0 3l2-2 2 2M2 8h8M8 6l2 2" stroke="#c9ced6" fill="none"/></svg></i>
      <i class="g"><svg width="10" height="9" viewBox="0 0 10 9"><rect x="1" y="1.500" width="8" height="6" stroke="#c9ced6" fill="none"/></svg></i>
      <i class="m2"><svg width="4" height="3"><use href="#dot"/></svg></i>
      <i class="b on bl"><svg width="10" height="9" viewBox="0 0 10 9"><path d="M1 8h8L5 1z" stroke="#fff" fill="none"/></svg></i>
      <i class="m2"><svg width="4" height="3"><use href="#dot"/></svg></i>
      <i class="g sp"><svg width="10" height="9" viewBox="0 0 10 9"><path d="M5 0l2 5H3zM2 9l3-5 3 5" stroke="#fff" fill="none"/></svg></i>
      <i class="g"><svg width="10" height="9" viewBox="0 0 10 9"><path d="M5 0l2 5H3zM2 9l3-5 3 5" stroke="#dfe3e8" fill="none"/></svg></i>
      <i class="g"><svg width="10" height="9" viewBox="0 0 10 9"><path d="M5 0v4L2 9M5 4l3 5" stroke="#dfe3e8" fill="none"/></svg></i>
      <span class="st">1:1 / 100% <svg width="4" height="3"><use href="#dot"/></svg></span>
      <i class="g gear"><svg width="10" height="10" viewBox="0 0 10 10"><circle cx="5" cy="5" r="3" fill="none" stroke="#dfe3e8" stroke-width="2"/><path d="M5 0v10M0 5h10" stroke="#dfe3e8"/></svg></i>
      <i class="m2"><svg width="4" height="3"><use href="#dot"/></svg></i>
      <i class="g"><svg width="10" height="9" viewBox="0 0 10 9"><path d="M5 0v9M0 4.500h10" stroke="#dfe3e8"/></svg></i>
      <i class="g sp"><svg width="5" height="9" viewBox="0 0 5 9"><path d="M1 0h3v9H1z" fill="#cfd4da"/></svg></i>
      <span class="st xs">小数</span>
      <i class="m2 wide"><svg width="4" height="3"><use href="#dot"/></svg></i>
      <i class="g"><svg width="8" height="9" viewBox="0 0 8 9"><path d="M.5.500h7v8h-7zM2 3h4M2 5h4" stroke="#b8bec6" fill="none"/></svg></i>
      <i class="g"><svg width="10" height="9" viewBox="0 0 10 9"><path d="M1 7V1h8v5M6 5v4M4 7h4" stroke="#b8bec6" fill="none"/></svg></i>
      <i class="m2"><svg width="4" height="3"><use href="#dot"/></svg></i>
      <i class="g"><svg width="10" height="9" viewBox="0 0 10 9"><path d="M1 1h3v3H1zM2 6h3v3H2zM7 2h2v2H7z" stroke="#b8bec6" fill="none"/></svg></i>
      <i class="g"><svg width="10" height="9" viewBox="0 0 10 9"><path d="M0 0h10v9H0z" fill="#2d6fb0"/><path d="M2 2h2v2H2zM6 5h2v2H6z" fill="#0c3a66"/></svg></i>
      <i class="g"><svg width="10" height="9" viewBox="0 0 10 9"><path d="M1 2h8M1 4.500h8M1 7h8" stroke="#7d8794"/></svg></i>
      <i class="g"><svg width="10" height="9" viewBox="0 0 10 9"><rect x="0" y="1" width="10" height="7" fill="#5b6674"/></svg></i>
      <i class="g"><svg width="10" height="9" viewBox="0 0 10 9"><path d="M0 3h10M0 6h10" stroke="#c0c6ce" stroke-width="1.300"/></svg></i>
      <i class="g"><svg width="10" height="9" viewBox="0 0 10 9"><path d="M1 2h8M1 5h8M1 8h8" stroke="#7d8794" stroke-dasharray="2 1"/></svg></i>
      <i class="b on"><svg width="10" height="10" viewBox="0 0 10 10"><circle cx="5" cy="5" r="4" stroke="#cfe4f8" fill="none"/><path d="M2 8l6-6" stroke="#cfe4f8"/></svg></i>
      <i class="g"><svg width="11" height="9" viewBox="0 0 11 9"><path d="M.5.500h10v8H.5z" stroke="#dfe3e8" fill="none"/><path d="M6 2h3v3" stroke="#dfe3e8" fill="none"/></svg></i>
      <i class="g"><svg width="12" height="9" viewBox="0 0 12 9"><path d="M0 1h12M0 4.500h12M0 8h12" stroke="#dfe3e8" stroke-width="1.400"/></svg></i>
    </div>
  </footer>
</div>
</body>
</html>
```

FILE: styles.css
```css
* { box-sizing: border-box; }
html, body { margin: 0; padding: 0; background: #000; height: 540px; overflow: hidden; }
body { font-family: "Noto Sans CJK SC", "Noto Sans", sans-serif; font-size: 8.6px; color: #d3d7dc; }
svg { display: block; flex: none; }
i, em, u { font-style: normal; text-decoration: none; }
.defs { position: absolute; }

.app {
  width: 1024px; height: 540px; margin: 0 32px;
  display: flex; flex-direction: column; overflow: hidden;
  background: #000; filter: blur(.35px);
}

/* menu */
.menubar { height: 12px; background: #222a33; display: flex; align-items: center; position: relative; padding-left: 26px; font-size: 8.8px; line-height: 12px; overflow: hidden; }
.logo { position: absolute; left: 3px; top: -4px; }
.m { margin-right: 10.500px; color: #c0c5cc; white-space: nowrap; }
.m.active { background: #3b4453; margin-right: 7px; padding: 0 3px; color: #dde0e4; }
.m.en { font-family: "Open Sans", "Noto Sans", sans-serif; margin-right: 12px; }
.mini { position: absolute; left: 348px; top: 4px; display: flex; gap: 2px; align-items: center; }
.mini i { width: 8px; height: 5px; background: #d8dade; display: block; }

/* ribbon */
.ribbon { height: 52px; background: #3a4351; display: flex; overflow: hidden; }
.panel { display: flex; flex-direction: column; border-right: 1px solid #2c3440; flex: none; }
.p1 { width: 121px; } .p2 { width: 136px; } .p3 { width: 72px; } .p4 { width: 134px; }
.p5 { width: 80px; } .p6 { width: 131px; } .p7 { width: 37px; } .p8 { width: 47px; }
.p9 { width: 46px; } .p10 { flex: 1; border-right: 0; }
.pbody { height: 42px; }
.ptitle { height: 10px; background: #38414e; line-height: 10px; font-size: 8.6px; color: #b9bfc7; display: flex; justify-content: center; align-items: center; gap: 3px; white-space: nowrap; position: relative; }
.ptitle.left { justify-content: flex-start; padding-left: 3px; background: #3a4351; }
.ptitle.launch::after { content: ""; position: absolute; right: 2px; top: 4px; width: 2px; height: 2px; background: #a9b0ba; }
.launch-mark { width: 2px; height: 2px; background: #a9b0ba; display: block; margin-left: 3px; }
.big-row { display: flex; align-items: flex-start; padding: 3px 0 0 2px; }
.p1 .big-row { padding-left: 0; }
.p8 .big-row { padding-left: 5px; }
.p9 .big-row { padding-left: 4px; }
.p10 .big-row { padding-left: 6px; }
.big { display: flex; flex-direction: column; align-items: center; flex: none; position: relative; margin-right: 4px; height: 39px; }
.big.mr2 { margin-right: 2px; }
.big.mr1 { margin-right: 1px; }
.big.mr0 { margin-right: 0; }
.big b { font-weight: 400; line-height: 10px; margin-top: 1px; white-space: nowrap; color: #d3d7dc; font-size: 8.6px; }
.big .dn { margin-top: 2px; }
.big .cut { margin-top: 0; font-size: 8px; color: #aeb4bc; }
.w16 { width: 16px; } .w19 { width: 19px; } .w20 { width: 20px; } .w22 { width: 22px; } .w24 { width: 24px; } .w26 { width: 26px; } .w30 { width: 27px; }
.bigA { font-family: "Liberation Sans", sans-serif; font-size: 23px; line-height: 19px; height: 19px; color: #e8eaed; }
.stack { display: flex; flex-direction: column; gap: 3px; padding-top: 0; }
.stack .ic { display: flex; align-items: center; gap: 6px; height: 10px; }
.stack .t { height: 10.500px; }
.st1 { margin-top: 0; }
.st2 { margin-left: 2px; }
.st3 { margin-left: -4px; }
.st4 { gap: 1px; }
.st4.dense { gap: 2px; margin-left: 0; }
.st4.pair { gap: 2px; margin-left: 1px; }
.sel { border: 1px solid #79b4e0; background: #33506d; width: 13px; height: 13px; }
.t { display: flex; align-items: center; gap: 3px; white-space: nowrap; line-height: 10px; }
.t .after { margin-left: 4px; }
.tools { display: grid; grid-template-columns: 36px 36px 46px 10px; grid-auto-rows: 13.400px; padding: 2px 0 0 3px; align-content: start; }
.t2 { display: flex; align-items: center; }
.laycol { width: 111px; margin-left: -3px; margin-top: -1px; }
.dd { display: flex; align-items: center; background: #4a5565; position: relative; font-family: "Open Sans", "Noto Sans", sans-serif; font-size: 8.6px; }
.dd .end { position: absolute; right: 3px; top: 5px; }
.dd-layer { height: 11px; gap: 2px; padding-left: 3px; }
.dd-layer .sw { margin-left: 1px; }
.sw { width: 7px; height: 7px; background: #fff; display: block; }
.lrow { display: flex; align-items: center; height: 12px; margin-top: 1.500px; padding-left: 1px; gap: .7px; }
.lrow em { margin-left: 0; white-space: nowrap; }
.swcol { display: flex; flex-direction: column; gap: 4px; width: 11px; margin-left: -5px; padding-top: 2px; }
.ddcol { display: flex; flex-direction: column; gap: 1px; width: 96px; margin-top: -1px; }
.d1 { height: 13px; padding-left: 7px; gap: 7px; }
.d1 .sw { width: 9px; height: 9px; }
.d2 { height: 12px; padding-left: 1px; }
.d2 span { margin-left: auto; margin-right: 24px; }
.ln { flex: 1; height: 1px; background: #e6e8eb; margin-right: 4px; display: block; }
.ln.thin { background: #8a93a0; }

/* document tabs */
.doctabs { height: 16px; background: #222a33; border-bottom: 2px solid #3b4453; display: flex; padding-left: 9px; gap: 2px; font-size: 8.800px; align-items: stretch; font-family: "Open Sans", "Noto Sans CJK SC", sans-serif; color: #8f98a4; }
.dt { background: #2b3440; display: flex; align-items: center; white-space: nowrap; border-radius: 3px 3px 0 0; }
.dt.s { width: 64px; padding-left: 5px; }
.dt.a { width: 137px; padding-left: 5px; }
.dt.b { width: 119px; padding-left: 5px; }
.dt.c { width: 64px; padding-left: 6px; margin-left: 1px; background: #3b4453; color: #c5cad1; font-size: 9px; }
.dt b { font-weight: 400; margin-left: auto; margin-right: 5px; }
.plus { margin: 1px 0 0 6px; width: 12px; height: 12px; border-radius: 6px; background: #2b3440; text-align: center; line-height: 12px; }

/* main */
.main { height: 447px; display: flex; background: #3b4453; }

.props { width: 155px; display: flex; flex-direction: column; background: #3b4454; }
.phead { height: 15px; background: #323a47; line-height: 15px; padding-left: 5px; font-size: 9px; display: flex; align-items: center; gap: 2px; color: #c9ced6; border-bottom: 1px solid #2c3440; }
.grip { width: 2px; height: 7px; background: repeating-linear-gradient(#8e97a3 0 1px, transparent 1px 2px); display: block; margin-right: 1px; }
.pinner { padding: 7px 5px 0 6px; flex: 1; }
.selrow { display: flex; align-items: center; height: 14px; gap: 4px; }
.selrow svg:nth-child(2) { margin-left: 5px; }
.sel-dd { width: 97px; height: 14px; background: #4a5565; padding: 0 3px 0 2px; line-height: 14px; display: flex; align-items: center; justify-content: space-between; color: #cdd2d8; }
.sec { height: 14px; margin-top: 1.400px; background: #2e3643; color: #eef0f2; font-size: 9px; font-weight: 500; padding: 0 4px; display: flex; align-items: center; justify-content: space-between; line-height: 14px; }
.selrow + .sec { margin-top: 0; }
.row { height: 13.400px; margin-left: 9px; display: flex; align-items: center; border-bottom: 1px solid #2f3744; border-left: 1px solid #2f3744; border-right: 1px solid #2f3744; line-height: 12px; color: #b5bbc3; }
.k { width: 61px; padding-left: 4px; white-space: nowrap; overflow: hidden; border-right: 1px solid #2f3744; height: 100%; color: #a9b0ba; }
.v { padding-left: 2px; white-space: nowrap; display: flex; align-items: center; flex: 1; color: #d6dade; font-family: "Open Sans", "Noto Sans CJK SC", sans-serif; font-size: 8.600px; }
.v.dim { color: #7a838f; }
.sw2 { width: 7px; height: 7px; background: #fff; margin-right: 3px; display: block; }
.v.line { padding-right: 3px; }
.v.line u { flex: 1; height: 1px; background: #c9ced6; margin-right: 3px; display: block; }
.v.line u.thin { background: #7c8591; }

.t20 { width: 58px; padding-left: 2px; display: flex; flex-direction: column; background: #2f3744; }
.thead { height: 18px; background: #3b4453; padding-left: 2px; line-height: 15px; font-size: 9px; font-family: "Open Sans", sans-serif; display: flex; align-items: center; gap: 2px; color: #c9ced6; }
.tlist { flex: 1; background: #f0f0f0; color: #2a2a2a; padding-top: 2px; border-bottom: 1px solid #8a8a8a; }
.tg { border-bottom: 1px solid #cfcfcf; padding-bottom: 1.400px; margin-bottom: 1.400px; }
.tg.last { border-bottom: 0; }
.g1 { padding-bottom: 1px; margin-bottom: 1px; }
.ti { height: 9.650px; display: flex; align-items: center; position: relative; padding-left: 3px; line-height: 9.650px; }
.ti svg { width: 5px; }
.ti.ic { padding-left: 1px; }
.ti.ic svg { width: 10px; height: 9px; }
.ti span { position: absolute; left: 15px; width: 35px; text-align: justify; text-align-last: justify; white-space: nowrap; }

.work { flex: 1; display: flex; flex-direction: column; min-width: 0; background: #000; }
.filetabs { height: 11px; background: #f0f0f0; border-bottom: 1px solid #8c8c8c; display: flex; align-items: stretch; font-size: 6px; color: #222; line-height: 10px; }
.ft { width: 93px; text-align: center; border-right: 1px solid #999; background: #fafafa; white-space: nowrap; overflow: hidden; font-weight: 500; }
.ft.f2 { width: 78px; }
.ft.f3 { width: 34px; margin-left: 2px; background: #fbeef0; color: #3a30c0; border: 0; font-family: "Liberation Mono", monospace; font-size: 6.500px; }

.viewport { flex: 1; position: relative; background: #000; overflow: hidden; }
.canvas { position: absolute; left: 0; top: 0; }
.vlabel { position: absolute; left: 2px; top: 1px; font-size: 7px; line-height: 10px; color: #d9d9d9; z-index: 1; }
.vc text { font-size: 11px; fill: #b5b5b5; text-anchor: middle; font-family: "Noto Sans CJK SC", sans-serif; }
.vc text.top { fill: #e2e2e2; font-size: 16px; }
.wcs { font-size: 5.500px; fill: #3a3a44; text-anchor: middle; font-family: "Open Sans", sans-serif; }
.dtitle { font-size: 3.700px; fill: #e8e8e8; font-weight: 700; font-family: "Noto Sans CJK SC", sans-serif; }

.hist { position: absolute; left: 370px; top: 383px; width: 120px; font-size: 6.800px; color: #d4d4d4; font-family: "Liberation Mono", "Noto Sans CJK SC", monospace; }
.hist p { margin: 0 0 2.500px; background: #555; width: max-content; padding: 0 1px; line-height: 8.500px; height: 8.500px; }
.hist p.wrap { height: auto; line-height: 9.500px; width: 104px; }
.cmd { position: absolute; left: 337px; bottom: 0; width: 140px; height: 15px; display: flex; }
.cmdl { width: 29px; background: #2f3744; display: flex; align-items: center; gap: 5px; padding-left: 2px; color: #c9ced6; font-size: 9px; }
.grip2 { width: 2px; height: 11px; display: block; background: repeating-linear-gradient(#8e97a3 0 1px, transparent 1px 2px); }
.cmdi { flex: 1; background: #a6a6a6; display: flex; align-items: center; padding: 0 3px; gap: 2px; color: #575757; font-style: italic; font-size: 8.600px; }
.cmdi span { margin-left: 4px; flex: 1; }

/* status */
.status { height: 13px; display: flex; background: #2a3340; align-items: center; font-size: 7.600px; color: #bcc2ca; }
.ltabs { width: 213px; display: flex; align-items: center; height: 13px; padding-left: 8px; flex: none; }
.lt { position: relative; margin-right: 12px; width: 23px; text-align: center; color: #a9b0ba; white-space: nowrap; font-size: 8.600px; line-height: 13px; z-index: 0; }
.lt::before { content: ""; position: absolute; top: 0; bottom: 0; left: -5px; right: -5px; transform: skewX(-18deg); border-right: 1px solid #3b4453; z-index: -1; }
.lt.on { color: #fff; font-weight: 500; width: 20px; margin-right: 11px; }
.lt.on::before { background: #3b4453; }
.lt.pl { width: 8px; margin-left: 1px; }
.lt.pl::before { border: 0; }
.sleft { display: flex; align-items: center; white-space: nowrap; width: 205px; flex: none; font-family: "Open Sans", "Noto Sans CJK SC", sans-serif; font-size: 6px; padding-left: 80px; }
.s1 { display: flex; align-items: center; gap: 2px; width: 47px; flex: none; }
.s2 { width: 59px; flex: none; font-size: 5.300px; }
.s3 { width: 15px; flex: none; color: #d6dade; font-size: 7px; }
.sic { flex: 1; display: flex; align-items: center; height: 13px; overflow: hidden; min-width: 0; }
.sic i { display: flex; align-items: center; justify-content: center; flex: none; height: 13px; }
.sic .g { width: 13px; }
.sic .gl { width: 15px; margin-left: 1px; }
.sic .xg { width: 14px; margin-left: 3px; }
.sic .m2 { width: 7px; }
.sic .wide { width: 20px; }
.sic .b { width: 13px; }
.sic .bl { margin-left: 1px; }
.sic .sp { margin-left: 2px; }
.sic .on { background: #4a8fcf; }
.st { white-space: nowrap; display: flex; align-items: center; gap: 2px; margin: 0 4px 0 1px; font-family: "Open Sans", sans-serif; font-size: 6.400px; color: #c5cad1; flex: none; width: 35px; }
.st.xs { width: 20px; margin: 0; padding-left: 3px; font-family: "Noto Sans CJK SC", sans-serif; }
```
